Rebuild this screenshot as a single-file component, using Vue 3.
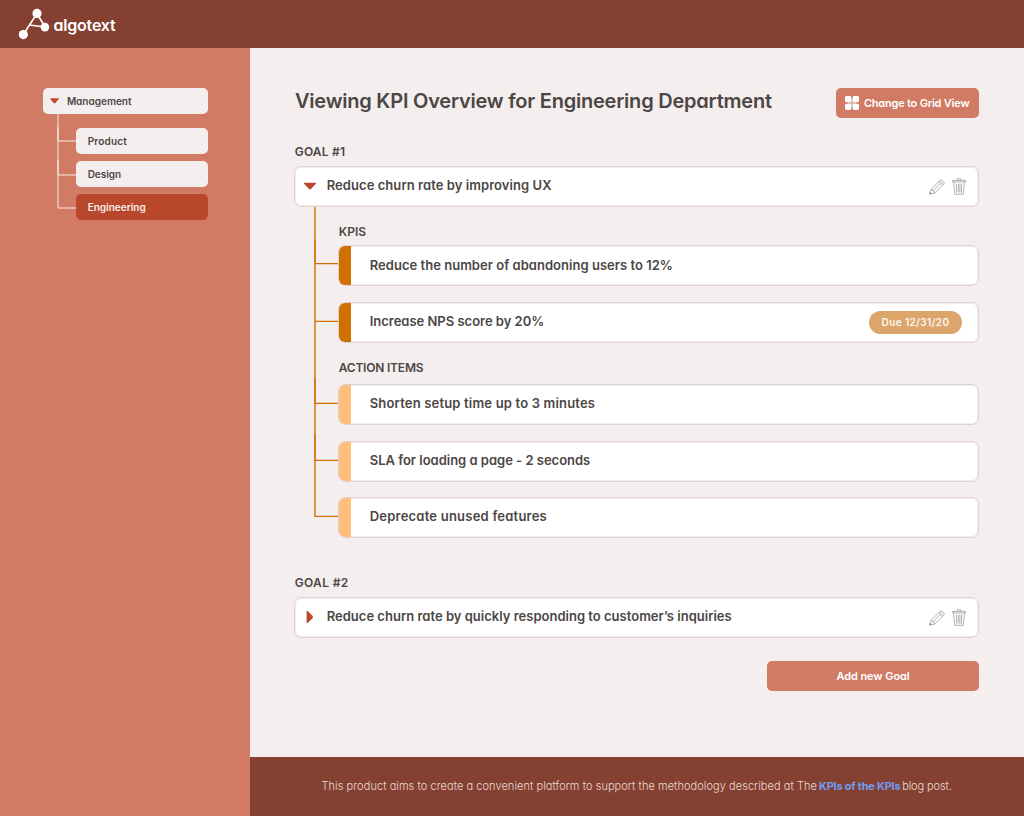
<script setup>
const departments = [
  { name: 'Product', tracking: 0.18, active: false },
  { name: 'Design', tracking: -0.05, active: false },
  { name: 'Engineering', tracking: 0, active: true }
]

const kpis = [
  { text: 'Reduce the number of abandoning users to 12%', tracking: 0.03 },
  { text: 'Increase NPS score by 20%', tracking: -0.01, due: 'Due 12/31/20' }
]

const actions = [
  { text: 'Shorten setup time up to 3 minutes', tracking: 0.18 },
  { text: 'SLA for loading a page - 2 seconds', tracking: -0.01 },
  { text: 'Deprecate unused features', tracking: 0.22 }
]

const spacing = (item) => ({ letterSpacing: item.tracking + 'px' })
</script>

<template>
  <div class="app">
    <header class="topbar">
      <svg class="logo" width="32" height="32" viewBox="18 8 32 32">
        <path d="M37 13.5 23.2 34.6M37 13.5 45 27M29.5 25 45 27" fill="none" stroke="#fff" stroke-width="1.7" />
        <circle cx="37" cy="13.4" r="4.6" fill="#fff" />
        <circle cx="44.9" cy="27.1" r="4.3" fill="#fff" />
        <circle cx="23.3" cy="34.6" r="4.6" fill="#fff" />
      </svg>
      <span class="brand">algotext</span>
    </header>

    <div class="body">
      <aside class="sidebar">
        <div class="node root">
          <svg width="9" height="6" viewBox="0 0 9 6">
            <path d="M.6.3h7.8q.7.1.3.8L5.3 5q-.8.7-1.6 0L.3 1.1Q-.1.4.6.3z" fill="#b9472b" />
          </svg>
          <span>Management</span>
        </div>
        <div class="branch">
          <svg class="lines" width="19" height="106" viewBox="0 0 19 106" fill="none" stroke="#f4eeee">
            <path d="M1 0v94h18" />
            <path d="M1 13v14h18" />
            <path d="M1 46v15h18" />
          </svg>
          <div class="children">
            <div v-for="d in departments" :key="d.name" class="node" :class="{ active: d.active }">
              <span :style="spacing(d)">{{ d.name }}</span>
            </div>
          </div>
        </div>
      </aside>

      <div class="content">
        <main class="main">
          <div class="heading">
            <h1>Viewing KPI Overview for Engineering Department</h1>
            <button class="btn grid-btn">
              <svg width="14" height="14" viewBox="0 0 14 14">
                <path d="M6 3h2v8H6zM3 6h8v2H3z" fill="#f4eeee" fill-opacity=".5" />
                <g fill="#fff">
                  <rect width="6.3" height="6.3" rx="1.4" />
                  <rect x="7.7" width="6.3" height="6.3" rx="1.4" />
                  <rect y="7.7" width="6.3" height="6.3" rx="1.4" />
                  <rect x="7.7" y="7.7" width="6.3" height="6.3" rx="1.4" />
                </g>
              </svg>
              <span>Change to Grid View</span>
            </button>
          </div>

          <h2 class="label goal-one">GOAL #1</h2>
          <div class="card goal">
            <svg class="caret" width="14" height="14" viewBox="0 0 14 14">
              <path d="M1.5 3.8h11q1 .1.4 1l-4.7 5q-1.2 1-2.4 0l-4.7-5q-.6-.9.4-1z" fill="#b9472b" />
            </svg>
            <span class="text first">Reduce churn rate by improving UX</span>
            <svg class="tools" width="38" height="17" viewBox="0 0 38 17" fill="none" stroke="#a09c9c" stroke-width=".8" stroke-linejoin="round">
              <path d="M.6 16.1 2 11.4 11.4 2q.7-.6 1.4 0l2.3 2.3q.6.7 0 1.4L5.7 15zM2 11.4q1.6-.2 1.8 1.6 1.7.2 1.9 2M9.6 3.8l3.7 3.7M10.8 2.7l3.7 3.7M3.8 13l7.6-7.6" />
              <path d="M.6 16.1l.6-1.9 1.3 1.3z" fill="#a09c9c" />
              <path d="M23.4 2.4h13.2v1.5H23.4zM27.8 2.2q0-1.5 1-1.5h2.4q1 0 1 1.5M24.6 4l1.1 12.3h8.6L35.4 4M27.4 5.7l.3 9M29.3 5.7v9M30.9 5.7v9M32.7 5.7l-.3 9" />
            </svg>
          </div>

          <div class="goal-tree">
            <svg class="lines" width="25" height="311" viewBox="0 0 25 311" fill="none" stroke="#d07000">
              <path d="M1 0v310" stroke-width="2" stroke-opacity=".7" />
              <path d="M1 32v25M1 171v26M1 227v27" stroke-width="2" stroke-opacity=".6" />
              <path d="M1 56.6h24M1 114.4h24M1 196.4h24M1 253.4h24M1 309.4h24" stroke-width="1.3" />
            </svg>
            <div class="details">
              <h3 class="label kpi-label">KPIS</h3>
              <div v-for="k in kpis" :key="k.text" class="card item kpi">
                <i class="bar"></i>
                <span class="text" :style="spacing(k)">{{ k.text }}</span>
                <span v-if="k.due" class="due">{{ k.due }}</span>
              </div>
              <h3 class="label action-label">ACTION ITEMS</h3>
              <div v-for="a in actions" :key="a.text" class="card item action">
                <i class="bar"></i>
                <span class="text" :style="spacing(a)">{{ a.text }}</span>
              </div>
            </div>
          </div>

          <h2 class="label goal-two">GOAL #2</h2>
          <div class="card goal">
            <svg class="caret" width="14" height="14" viewBox="0 0 14 14">
              <path d="M3.6 1.4q.1-1 1-.4l4.9 4.8q1 1.2 0 2.4L4.6 13q-.9.6-1-.4z" fill="#b9472b" />
            </svg>
            <span class="text second">Reduce churn rate by quickly responding to customer’s inquiries</span>
            <svg class="tools" width="38" height="17" viewBox="0 0 38 17" fill="none" stroke="#a09c9c" stroke-width=".8" stroke-linejoin="round">
              <path d="M.6 16.1 2 11.4 11.4 2q.7-.6 1.4 0l2.3 2.3q.6.7 0 1.4L5.7 15zM2 11.4q1.6-.2 1.8 1.6 1.7.2 1.9 2M9.6 3.8l3.7 3.7M10.8 2.7l3.7 3.7M3.8 13l7.6-7.6" />
              <path d="M.6 16.1l.6-1.9 1.3 1.3z" fill="#a09c9c" />
              <path d="M23.4 2.4h13.2v1.5H23.4zM27.8 2.2q0-1.5 1-1.5h2.4q1 0 1 1.5M24.6 4l1.1 12.3h8.6L35.4 4M27.4 5.7l.3 9M29.3 5.7v9M30.9 5.7v9M32.7 5.7l-.3 9" />
            </svg>
          </div>

          <button class="btn add-btn">Add new Goal</button>
        </main>

        <footer class="footer">
          <span class="lead">This product aims to create a convenient platform to support the methodology described at The</span>
          <a class="link">KPIs of the KPIs</a>
          <span class="tail">blog post.</span>
        </footer>
      </div>
    </div>
  </div>
</template>

<style>
body {
  margin: 0;
}
</style>

<style scoped>
.app {
  display: flex;
  flex-direction: column;
  width: 1024px;
  height: 816px;
  overflow: hidden;
  font-family: Inter, "Liberation Sans", sans-serif;
  font-feature-settings: "cv11";
  color: #4c4645;
  background: #f4eeee;
}
.app * {
  box-sizing: border-box;
}
svg {
  display: block;
  flex: none;
}
span,
a {
  white-space: nowrap;
}
.topbar {
  display: flex;
  height: 48px;
  flex: none;
  padding: 8px 0 0 18px;
  background: #844132;
}
.brand {
  margin-left: 3.5px;
  font-size: 16px;
  font-weight: 600;
  line-height: 34px;
  letter-spacing: -0.2px;
  color: #fff;
}
.body {
  display: flex;
  flex: 1;
  min-height: 0;
}
.sidebar {
  width: 250px;
  flex: none;
  padding: 40px 42px 0 43px;
  background: #d17a64;
}
.node {
  display: flex;
  align-items: center;
  height: 26px;
  padding-left: 11.7px;
  border-radius: 5px;
  background: #f4eeee;
  font-size: 10px;
  font-weight: 600;
}
.node span {
  margin-top: -1px;
}
.node.root {
  padding-left: 7px;
  gap: 7.9px;
}
.node.active {
  background: #b9472b;
  color: #f8eeeb;
}
.branch {
  display: flex;
  padding-left: 14px;
}
.children {
  display: flex;
  flex: 1;
  flex-direction: column;
  gap: 7px;
  padding-top: 14px;
}
.content {
  display: flex;
  flex: 1;
  flex-direction: column;
}
.main {
  flex: 1;
  display: flex;
  flex-direction: column;
  padding: 40px 45px 0 44px;
}
.heading {
  display: flex;
  justify-content: space-between;
  height: 30px;
}
h1 {
  margin: 0 0 0 1px;
  font-size: 20px;
  font-weight: 600;
  line-height: 26px;
  letter-spacing: -0.22px;
  white-space: nowrap;
}
.btn {
  display: flex;
  align-items: center;
  justify-content: center;
  height: 30px;
  padding: 0;
  border: 0;
  border-radius: 5px;
  background: #d17a64;
  color: #fff;
  font: 600 11px Inter, "Liberation Sans", sans-serif;
  font-feature-settings: "cv11";
}
.grid-btn {
  width: 143px;
  justify-content: flex-start;
  padding-left: 9px;
  gap: 4.9px;
  letter-spacing: -0.21px;
}
.label {
  margin: 0;
  height: 16px;
  font-size: 12px;
  font-weight: 600;
  line-height: 16px;
  text-indent: 0.7px;
  white-space: nowrap;
}
.goal-one {
  margin: 26px 0 6px;
  letter-spacing: 0.2px;
}
.goal-two {
  margin: 37px 0 6px;
  letter-spacing: 0.35px;
}
.card {
  display: flex;
  align-items: center;
  height: 41px;
  border: 1px solid #dfd3d2;
  border-radius: 7px;
  background: #fff;
  box-shadow: inset 0 0 0 1px rgba(223, 211, 210, 0.4);
}
.goal {
  padding: 0 11px 0 8px;
}
.text {
  font-size: 13px;
  font-weight: 600;
  line-height: 18px;
  margin-top: -3px;
}
.goal .text {
  margin-left: 9.7px;
}
.first {
  letter-spacing: 0.06px;
}
.second {
  letter-spacing: 0.01px;
}
.caret {
  margin-top: -1px;
}
.tools {
  margin: -1px 0 0 auto;
}
.goal-tree {
  display: flex;
  padding-left: 20px;
}
.goal-tree .lines {
  margin-right: -1px;
}
.details {
  display: flex;
  flex: 1;
  flex-direction: column;
}
.kpi-label {
  margin: 17px 0 5px;
  letter-spacing: 0.05px;
}
.action-label {
  margin: 17px 0 8px;
  letter-spacing: -0.2px;
}
.item {
  overflow: hidden;
  padding-right: 16px;
}
.kpi + .kpi,
.action + .action {
  margin-top: 16px;
}
.action:last-child {
  margin-top: 15px;
}
.item .text {
  margin-left: 18.7px;
}
.kpi-label + .kpi .text {
  margin-top: -1px;
}
.bar {
  width: 12px;
  height: 100%;
  flex: none;
}
.kpi .bar {
  background: #d07000;
}
.action .bar {
  background: #febd79;
}
.due {
  width: 93px;
  height: 23px;
  margin-left: auto;
  border-radius: 12px;
  background: #dba56b;
  color: #fff8ef;
  font-size: 10px;
  font-weight: 600;
  line-height: 23px;
  letter-spacing: 0.38px;
  text-align: center;
}
.add-btn {
  width: 212px;
  margin-top: 23px;
  align-self: flex-end;
  letter-spacing: -0.07px;
}
.footer {
  display: flex;
  height: 59px;
  flex: none;
  padding-left: 71.5px;
  background: #844132;
  color: #ecd9d4;
  font-size: 11px;
  font-weight: 300;
  line-height: 59px;
}
.lead {
  letter-spacing: 0.06px;
}
.link {
  margin: 0 1.8px 0 2px;
  color: #6f9bf2;
  font-weight: 700;
  letter-spacing: -0.23px;
}
.tail {
  letter-spacing: -0.1px;
}
</style>
